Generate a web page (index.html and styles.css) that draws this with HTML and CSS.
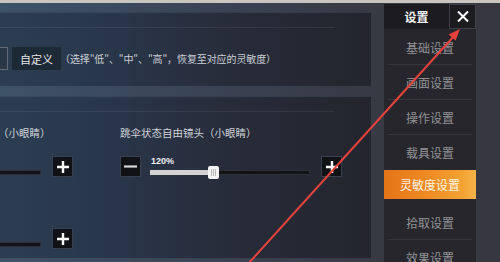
FILE: index.html
```html
<!DOCTYPE html>
<html lang="zh-CN">
<head>
<meta charset="utf-8">
<title>设置 - 灵敏度设置</title>
<link rel="stylesheet" href="styles.css">
</head>
<body>
<div class="screen">
  <div class="topline"></div>
  <div class="stage">
    <main class="content">
      <section class="box box-preset">
        <div class="box-head"></div>
        <div class="preset-row">
          <button class="preset">低</button>
          <button class="preset">中</button>
          <button class="preset preset-outline">高</button>
          <button class="preset preset-active">自定义</button>
          <span class="hint">（选择"低"、"中"、"高"，恢复至对应的灵敏度）</span>
        </div>
      </section>
      <section class="box box-sliders">
        <div class="box-head"></div>
        <div class="slider-grid">
          <div class="col">
            <div class="item">
              <div class="label">第三人称（角色载具）自由镜头（小眼睛）</div>
              <div class="slider">
                <button class="step"><svg width="13" height="13" viewBox="0 0 13 13"><path d="M0 6.5h13" stroke="#d8d8d8" stroke-width="2.2"/></svg></button>
                <div class="track-wrap">
                  <span class="value">100%</span>
                  <div class="track"><div class="fill" style="width:30%"></div><span class="thumb" style="left:calc(30% - 5px)"></span></div>
                </div>
                <button class="step"><svg width="12" height="12" viewBox="0 0 12 12"><path d="M6 0v12M0 6h12" stroke="#fff" stroke-width="2.4"/></svg></button>
              </div>
            </div>
            <div class="item">
              <div class="label">第一人称（角色）（小眼睛）</div>
              <div class="slider">
                <button class="step"><svg width="13" height="13" viewBox="0 0 13 13"><path d="M0 6.5h13" stroke="#d8d8d8" stroke-width="2.2"/></svg></button>
                <div class="track-wrap">
                  <span class="value">100%</span>
                  <div class="track"><div class="fill" style="width:30%"></div><span class="thumb" style="left:calc(30% - 5px)"></span></div>
                </div>
                <button class="step"><svg width="12" height="12" viewBox="0 0 12 12"><path d="M6 0v12M0 6h12" stroke="#fff" stroke-width="2.4"/></svg></button>
              </div>
            </div>
          </div>
          <div class="col">
            <div class="item">
              <div class="label">跳伞状态自由镜头（小眼睛）</div>
              <div class="slider">
                <button class="step"><svg width="13" height="13" viewBox="0 0 13 13"><path d="M0 6.5h13" stroke="#d8d8d8" stroke-width="2.2"/></svg></button>
                <div class="track-wrap">
                  <span class="value">120%</span>
                  <div class="track"><div class="fill" style="width:39%"></div><span class="thumb" style="left:calc(39% - 5px)"></span></div>
                </div>
                <button class="step"><svg width="12" height="12" viewBox="0 0 12 12"><path d="M6 0v12M0 6h12" stroke="#fff" stroke-width="2.4"/></svg></button>
              </div>
            </div>
          </div>
        </div>
      </section>
    </main>
    <aside class="side">
      <div class="side-head">
        <div class="side-title">设置</div>
        <button class="close"><svg width="12" height="11" viewBox="0 0 12 11"><path d="M1 0.5l10 10M11 0.5l-10 10" stroke="#fff" stroke-width="2"/></svg></button>
      </div>
      <ul class="menu">
        <li>基础设置</li>
        <li>画面设置</li>
        <li>操作设置</li>
        <li class="pre">载具设置</li>
        <li class="active">灵敏度设置</li>
        <li>拾取设置</li>
        <li>效果设置</li>
      </ul>
    </aside>
  </div>
  <svg class="arrow" width="500" height="262" viewBox="0 0 500 262">
    <path d="M248 264L455 35" stroke="#e8433b" stroke-width="2" fill="none"/>
    <polygon points="460,29 455.6,40.6 448.6,34.4" fill="#e8433b"/>
  </svg>
</div>
</body>
</html>
```

FILE: styles.css
```css
* { box-sizing: border-box; margin: 0; padding: 0; }
html, body { width: 500px; height: 262px; overflow: hidden; }
body {
  background: #383b46;
  font-family: "Noto Sans CJK SC", "Noto Sans", sans-serif;
  color: #cfd3d8;
}
button { font: inherit; color: inherit; border: 0; background: none; }

.screen {
  position: relative;
  width: 500px;
  height: 262px;
  display: flex;
  flex-direction: column;
  background: linear-gradient(90deg, #3e5268 0%, #3a4455 40%, #383a45 72%, #37373f 100%);
}
.topline { height: 3px; flex: none; background: #cbc5bf; }
.stage { flex: 1; display: flex; min-height: 0; }

/* content */
.content {
  width: 371px;
  flex: none;
  display: flex;
  flex-direction: column;
  gap: 10px;
  padding: 9px 0 4px;
  overflow: hidden;
}
.box {
  background: linear-gradient(90deg, #2c3d52 0%, #29364a 30%, #272c39 62%, #24252e 100%);
  border-top: 1px solid rgba(130, 160, 190, 0.16);
}
.box-preset { height: 74px; flex: none; }
.box-sliders { flex: 1; }
.box-head {
  height: 15px;
  width: 335px;
  border-bottom: 1px solid rgba(255, 255, 255, 0.07);
}

.preset-row {
  display: flex;
  align-items: center;
  gap: 4px;
  margin: 19px 0 0 -147px;
  height: 23px;
  white-space: nowrap;
}
.preset {
  width: 49px;
  height: 23px;
  font-size: 11px;
  color: #d6dade;
  background: #223040;
}
.preset-outline { border: 1px solid #626a78; background: #2a3747; }
.preset-active { background: #1e2936; color: #e4e6e9; }
.hint {
  font-size: 10px;
  letter-spacing: -0.1px;
  color: #ccd0d6;
  margin-left: -5px;
}

.slider-grid {
  display: grid;
  grid-template-columns: 222px 222px;
  column-gap: 47px;
  margin-left: -149px;
  padding-top: 14px;
}
.col { display: flex; flex-direction: column; gap: 21px; }
.item { display: flex; flex-direction: column; gap: 16px; }
.label {
  font-size: 10.5px;
  line-height: 14px;
  height: 14px;
  color: #cfd3d8;
  white-space: nowrap;
}
.slider {
  display: grid;
  grid-template-columns: 21px 180px 21px;
  height: 21px;
}
.step {
  width: 21px;
  height: 21px;
  background: #101216;
  border: 1px solid #394050;
  display: flex;
  align-items: center;
  justify-content: center;
}
.track-wrap {
  margin: 0 11px 0 9px;
  display: flex;
  flex-direction: column;
  justify-content: space-between;
  padding-bottom: 2px;
}
.value {
  font-family: "Liberation Sans", Arial, sans-serif;
  font-weight: bold;
  font-size: 9px;
  line-height: 10px;
  color: #f2f2f2;
  padding-left: 1px;
}
.track {
  position: relative;
  height: 5px;
  background: #121316;
  border: 1px solid #2e3038;
}
.fill { background: #d2d2d2; margin: -1px 0 0 -1px; height: 5px; }
.thumb {
  position: absolute;
  top: -5px;
  width: 11px;
  height: 13px;
  background: #f4f4f4;
  border-radius: 2px;
  background-image: linear-gradient(90deg, transparent 3px, #b8b8b8 3px, #b8b8b8 4px, transparent 4px, transparent 5px, #b8b8b8 5px, #b8b8b8 6px, transparent 6px, transparent 7px, #b8b8b8 7px, #b8b8b8 8px, transparent 8px);
  background-size: 11px 7px;
  background-position: 0 3px;
  background-repeat: no-repeat;
}

/* sidebar */
.side {
  width: 92px;
  flex: none;
  margin: 1px 0 0 13px;
  background: #26262c;
  display: flex;
  flex-direction: column;
}
.side-head { display: flex; height: 25px; flex: none; }
.side-title {
  flex: 1;
  background: #1b1b20;
  color: #f4f4f4;
  font-size: 12px;
  font-weight: bold;
  display: flex;
  align-items: center;
  justify-content: center;
}
.close {
  width: 27px;
  height: 25px;
  background: #1b1b20;
  border: 1px solid #40404a;
  display: flex;
  align-items: center;
  justify-content: center;
}
.menu { list-style: none; padding-top: 1px; }
.menu li {
  height: 35px;
  margin: 0 4px;
  border-bottom: 1px solid #37373e;
  display: flex;
  align-items: center;
  justify-content: center;
  font-size: 12px;
  color: #929297;
}
.menu li.pre { border-bottom-color: transparent; }
.menu li.active {
  height: 29px;
  margin: 0 0 6px;
  border-bottom: 0;
  background: linear-gradient(90deg, #e47418 0%, #ee8a22 45%, #f3a232 85%, #f6b448 100%);
  color: #fff3e2;
}

.arrow { position: absolute; left: 0; top: 0; pointer-events: none; }
```
